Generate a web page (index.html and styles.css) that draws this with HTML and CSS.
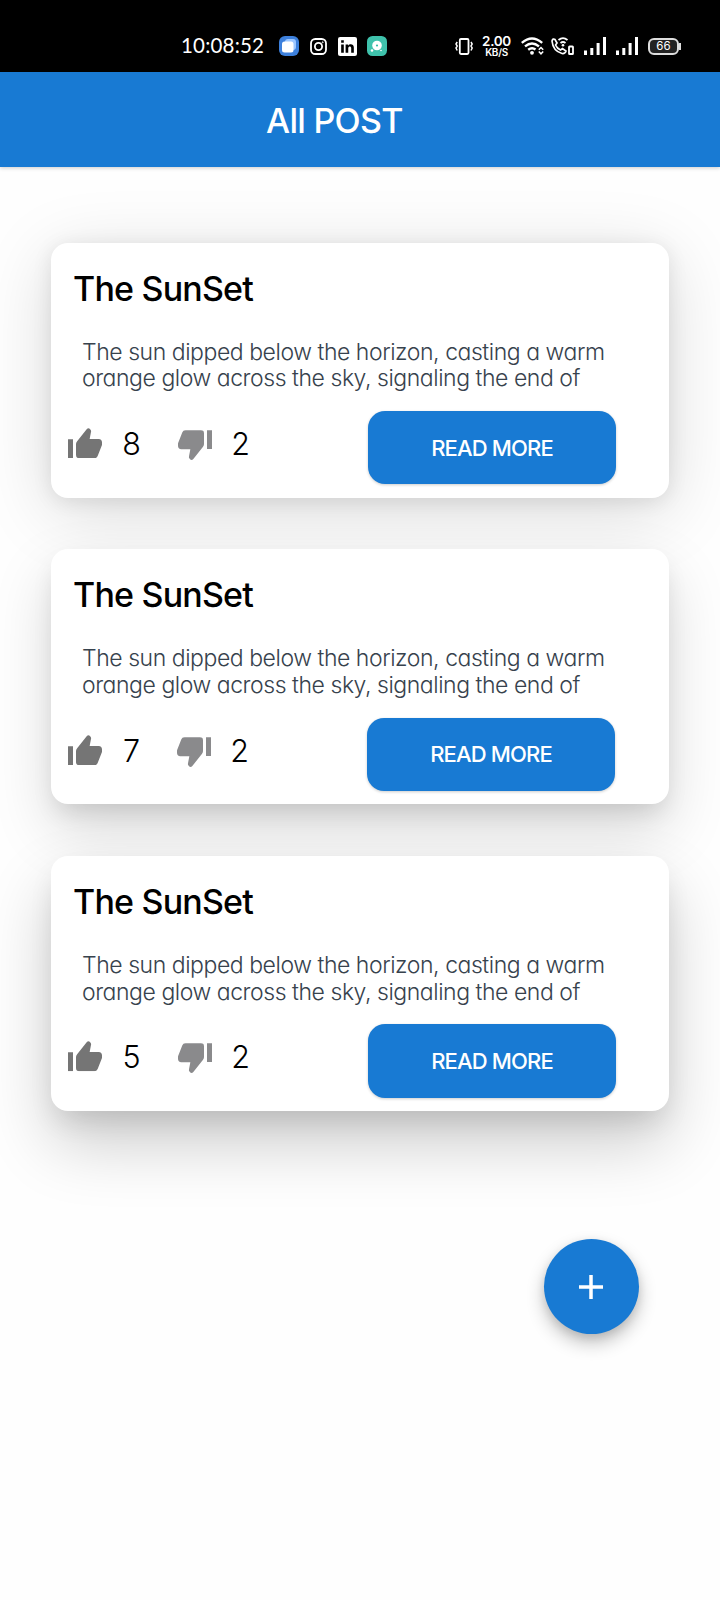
FILE: index.html
```html
<!DOCTYPE html>
<html lang="en">
<head>
<meta charset="utf-8">
<title>All POST</title>
<link rel="stylesheet" href="styles.css">
</head>
<body>
<svg class="defs" aria-hidden="true">
  <symbol id="thumb" viewBox="0 0 102 91">
    <path d="M0 34H15V91H0ZM24 48Q24 43 28 39L56 4Q61-2 66 3L68 6Q70 8 69 12L65 33H92Q102 34 102 43V51L89 84Q86 91 79 91H34Q24 91 24 81Z"/>
  </symbol>
  <symbol id="signal" viewBox="0 0 22 18">
    <path d="M0 13.500h3V18H0zM6.300 11h3v7h-3zM12.600 6h3v12h-3zM19 0h3v18h-3z"/>
  </symbol>
</svg>
<div class="status">
  <div class="group">
    <span class="clock">10:08:52</span>
    <svg class="app" width="20" height="20" viewBox="0 0 20 20"><rect width="20" height="20" rx="6" fill="#3d80dc"/><rect x="6" y="3" width="11" height="11" rx="3" fill="#9cc6ff"/><rect x="3" y="5.500" width="11.500" height="11" rx="2.500" fill="#fff"/></svg>
    <svg class="insta" width="17" height="17" viewBox="0 0 17 17" fill="none" stroke="#fff" stroke-width="1.800"><rect x="1" y="1" width="15" height="15" rx="4.300"/><circle cx="8.500" cy="8.500" r="3.600"/><circle cx="12.700" cy="4.300" r=".5" stroke-width="1"/></svg>
    <svg class="linked" width="19" height="19" viewBox="0 0 18 18"><rect width="18" height="18" rx="2" fill="#fff"/><path d="M3 7h2.500v8H3zM3 3h2.500v2.500H3zM7.200 7h2.400v1.200C11 6 15 6.300 15 10v5h-2.500v-4.500c0-2.300-2.800-2-2.800 0V15H7.200z" fill="#000"/></svg>
    <svg class="chat" width="20" height="20" viewBox="0 0 20 20"><rect width="20" height="20" rx="5.500" fill="#3fc2ac"/><circle cx="10" cy="9.500" r="4.800" fill="#fff"/><circle cx="5" cy="14.500" r="1.300" fill="#fff"/><circle cx="14" cy="14.500" r=".8" fill="#fff"/><circle cx="10" cy="9.500" r="1.100" fill="#36bda5"/></svg>
  </div>
  <div class="group">
    <svg width="18" height="17" viewBox="0 0 18 17" fill="none" stroke="#fff"><rect x="4.800" y="1" width="8.700" height="15" rx="1.200" stroke-width="1.800"/><path d="M2.200 4l-1.200 2 1.200 2-1.200 2 1.200 2.500M16 4l1.200 2-1.200 2 1.200 2-1.200 2.500" stroke-width="1.500"/></svg>
    <div class="speed"><span class="rate">2.00</span><span class="unit">KB/S</span></div>
    <svg class="wifi" width="23" height="18" viewBox="0 0 23 18" fill="none" stroke="#fff" stroke-width="2.400"><path d="M.8 5.800Q11 -3 21.200 5.800M4 9.300Q11 3.500 18 9.300M7.200 12.700Q11 9.800 14.500 12.500"/><circle cx="11" cy="15.800" r="1.900" fill="#fff" stroke="none"/><path d="M17.800 12.800l2.200-2.300 2.200 2.300M17.800 14.500l2.200 2.300 2.200-2.300" stroke-width="1.500"/></svg>
    <svg class="call" width="23" height="18" viewBox="0 0 23 18" fill="none" stroke="#fff"><path d="M1 4Q2 1 4 2.500L6 6 4.500 8Q6 11.500 9.500 13L11.500 11.500 15 14Q14 17 11 16.500Q2 14 1 4Z" stroke-width="1.700"/><path d="M7.500 3Q12 -.8 16.500 3M9.500 6Q12 4 14.500 6" stroke-width="1.700"/><circle cx="12" cy="8.200" r="1.300" fill="#fff" stroke="none"/><rect x="18" y="9.500" width="4" height="7.500" rx=".6" stroke-width="1.800"/></svg>
    <svg class="signal" width="22" height="18" fill="#fff"><use href="#signal"/></svg>
    <svg class="signal" width="22" height="18" fill="#fff"><use href="#signal"/></svg>
    <div class="battery">66</div>
    <div class="cap"></div>
  </div>
</div>
<header class="appbar"><h1>All POST</h1></header>
<main class="posts">
  <article class="card low">
    <h2>The SunSet</h2>
    <p>The sun dipped below the horizon, casting a warm<br>orange glow across the sky, signaling the end of</p>
    <div class="actions">
      <svg class="up"><use href="#thumb"/></svg><span class="count">8</span>
      <svg class="down"><use href="#thumb"/></svg><span class="count">2</span>
      <button>READ MORE</button>
    </div>
  </article>
  <article class="card mid">
    <h2>The SunSet</h2>
    <p>The sun dipped below the horizon, casting a warm<br>orange glow across the sky, signaling the end of</p>
    <div class="actions narrow">
      <svg class="up"><use href="#thumb"/></svg><span class="count">7</span>
      <svg class="down"><use href="#thumb"/></svg><span class="count">2</span>
      <button>READ MORE</button>
    </div>
  </article>
  <article class="card high">
    <h2>The SunSet</h2>
    <p>The sun dipped below the horizon, casting a warm<br>orange glow across the sky, signaling the end of</p>
    <div class="actions">
      <svg class="up"><use href="#thumb"/></svg><span class="count">5</span>
      <svg class="down"><use href="#thumb"/></svg><span class="count">2</span>
      <button>READ MORE</button>
    </div>
  </article>
</main>
<button class="fab" aria-label="Add post"><svg width="24" height="24" viewBox="0 0 24 24" stroke="#fff" stroke-width="3.500"><path d="M12 0v24M0 12h24"/></svg></button>
</body>
</html>
```
FILE: styles.css
```css
* { box-sizing: border-box; }
body {
  margin: 0;
  height: 1600px;
  background: #fefefe;
  font-family: Inter, "Liberation Sans", sans-serif;
  font-feature-settings: "cv11";
  overflow: hidden;
}
.defs { position: absolute; width: 0; height: 0; }
.status {
  height: 72px;
  padding: 20px 39px 0 181px;
  display: flex;
  justify-content: space-between;
  background: #000;
  color: #fff;
}
.group { display: flex; align-items: center; height: 52px; }
.clock { font: 20.500px Lato, sans-serif; letter-spacing: .2px; width: 84px; padding-bottom: 2px; white-space: nowrap; }
.app { margin-left: 14px; }
.insta { margin-left: 11px; }
.linked { margin-left: 11px; }
.chat { margin-left: 10px; }
.speed { width: 29px; margin-left: 9px; display: flex; flex-direction: column; align-items: center; font-weight: 600; }
.rate { font-size: 13.500px; line-height: 12px; letter-spacing: -.3px; }
.unit { font-size: 10px; line-height: 10px; letter-spacing: -.3px; }
.wifi { margin-left: 10px; }
.call { margin-left: 7px; }
.signal { margin-left: 10px; }
.battery { width: 31px; height: 17px; margin-left: 10px; border: 2px solid #ddd; border-radius: 6px; background: #222; font-size: 11.500px; line-height: 13px; text-align: center; }
.cap { width: 2px; height: 7px; background: #ddd; }
.appbar {
  height: 95px;
  padding-left: 266px;
  background: #187ad3;
  box-shadow: 0 1px 4px rgba(0,0,0,.2);
  color: #fff;
}
h1 { margin: 0; font-size: 34px; line-height: 97px; font-weight: 450; letter-spacing: -.7px; }
.posts { padding: 75.500px 51px 0; display: flex; flex-direction: column; gap: 51.700px; }
.card { position: relative; height: 255px; padding: 25px 24px 0 22px; border-radius: 17px; background: #fff; }
.low { box-shadow: 0 14px 70px rgba(0,0,0,.15), 0 3px 20px rgba(0,0,0,.09); }
.mid { box-shadow: 0 26px 60px rgba(0,0,0,.15), 0 12px 24px -6px rgba(0,0,0,.13); }
.high { box-shadow: 0 32px 66px rgba(0,0,0,.2), 0 14px 28px -6px rgba(0,0,0,.12); }
h2 { margin: 0; font-size: 34px; line-height: 42px; font-weight: 500; letter-spacing: -.8px; color: #000; }
p { margin: 29px 0 0 9px; font-size: 23px; line-height: 26.700px; font-weight: 350; letter-spacing: -.45px; color: #37424d; white-space: nowrap; }
.actions { display: flex; align-items: flex-start; margin: 19px 0 0 -5px; }
.actions svg { width: 34px; height: 30.300px; }
.actions .up { margin-top: 17px; fill: #757575; }
.actions .down { margin-top: 19px; margin-left: 36px; fill: #8a8a8c; transform: rotate(180deg); }
.count { width: 21px; margin-left: 19px; margin-top: 12px; font-size: 30.500px; line-height: 41px; font-weight: 350; text-align: center; color: #000; }
.down + .count { margin-left: 18px; }
.actions button { width: 248px; height: 73.500px; margin-left: 117px; padding: 0; border: 0; border-radius: 17px; background: #187ad3; color: #fff; font: 450 22px Inter, sans-serif; letter-spacing: -.85px; box-shadow: 0 1px 3px rgba(0,0,0,.2); }
.actions.narrow .down { margin-left: 35px; }
.fab { position: absolute; left: 543.500px; top: 1239px; width: 95px; height: 95px; padding: 0; border: 0; border-radius: 50%; background: #187ad3; display: flex; align-items: center; justify-content: center; box-shadow: 0 9px 18px rgba(0,0,0,.24), 0 3px 8px rgba(0,0,0,.1); }
```
